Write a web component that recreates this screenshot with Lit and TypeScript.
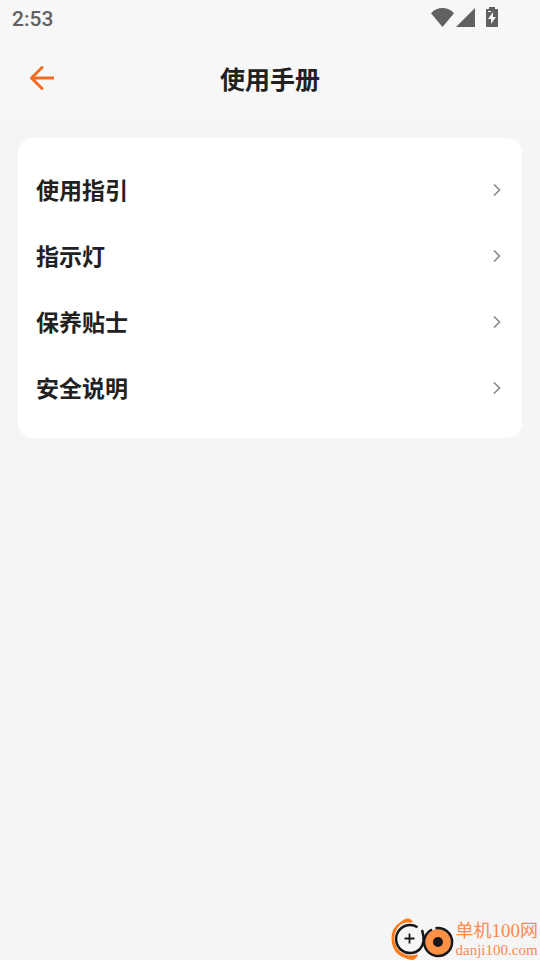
import { LitElement, html, css } from "lit";
import { customElement, property } from "lit/decorators.js";

@customElement("status-bar")
class StatusBar extends LitElement {
  static styles = css`
    :host {
      display: flex;
      align-items: center;
      justify-content: space-between;
      height: 36px;
      padding: 0 40px 0 12px;
      color: #616161;
      font: 500 21px/36px Roboto, sans-serif;
    }
    time {
      padding-top: 2px;
    }
    .icons {
      display: flex;
    }
    svg {
      display: block;
      fill: currentColor;
    }
  `;

  render() {
    return html`
      <time>2:53</time>
      <div class="icons">
        <svg width="70" height="24" viewBox="0 0 70 24" aria-hidden="true">
          <path d="M1 7.2C7.5.4 17.5.4 24 7.2L12.5 21Z" />
          <path d="M26 21L45 2V21Z" />
          <path
            fill-rule="evenodd"
            d="M59 1h6v2h2q1 0 1 1v16q0 1-1 1H57q-1 0-1-1V4q0-1 1-1h2ZM63 6l-5 7h3v5l5-7h-3ZM58 5h3v1h-3Z"
          />
        </svg>
      </div>
    `;
  }
}

@customElement("manual-item")
class ManualItem extends LitElement {
  @property() label = "";

  static styles = css`
    :host {
      display: block;
    }
    button {
      display: flex;
      align-items: center;
      justify-content: space-between;
      width: 100%;
      height: 66px;
      padding: 0 20px 0 18px;
      border: 0;
      background: none;
      color: #212121;
      font: inherit;
      text-align: left;
      cursor: pointer;
    }
    svg {
      display: block;
      fill: none;
      stroke: #8c8c8c;
      stroke-width: 1.7;
    }
  `;

  render() {
    return html`
      <button type="button">
        <span>${this.label}</span>
        <svg width="10" height="14" viewBox="0 0 10 14" aria-hidden="true">
          <path d="M2 2.5L7.500 8L2 13.5" />
        </svg>
      </button>
    `;
  }
}

@customElement("site-mark")
class SiteMark extends LitElement {
  static styles = css`
    :host {
      display: flex;
      align-items: flex-end;
      color: #fb8a4c;
    }
    svg {
      display: block;
    }
    .text {
      display: flex;
      flex-direction: column;
      padding-left: 1px;
      white-space: nowrap;
    }
    .name {
      font: 400 18px/18px "Noto Sans CJK SC", sans-serif;
    }
    .digits {
      font: 19px/18px "Liberation Serif", serif;
    }
    .site {
      font: 15px/20px "Liberation Serif", serif;
    }
  `;

  render() {
    return html`
      <svg width="64" height="42" viewBox="0 0 64 42" fill="none" aria-hidden="true">
        <path
          d="M8 5Q11 3 13 1.500Q17-.5 20 1.500L22 4Q20 5 16 4.500Q8 5 5 13Q1 22 6 30Q10 36 18 37.500L24 37L27 36Q26 40 22 42Q18 42 14 40Q5 37 2 29Q-1 20 2 12Q4 8 8 5Z"
          fill="#ff7a18"
        />
        <circle cx="18.500" cy="21" r="14" fill="#f5f5f5" />
        <path d="M26.500 9.200A14 14 0 1 0 29 31Q35 24 31 12" stroke="#171719" stroke-width="2.500" />
        <circle cx="47" cy="24" r="13" fill="#ff9147" />
        <path d="M44.500 10.200A14 14 0 1 1 34 19Q36 14 41 11.500" stroke="#171719" stroke-width="2.500" />
        <path d="M13.500 20.500H23.500M18.500 15.500V25.500" stroke="#171719" stroke-width="1.800" />
        <circle cx="47" cy="24" r="5" fill="#171719" />
      </svg>
      <div class="text">
        <span class="name">单机<span class="digits">100</span>网</span>
        <span class="site">danji100.com</span>
      </div>
    `;
  }
}

@customElement("app-root")
class AppRoot extends LitElement {
  private items = ["使用指引", "指示灯", "保养贴士", "安全说明"];

  static styles = css`
    :host {
      display: flex;
      flex-direction: column;
      min-height: 100vh;
      background: #f5f5f5;
      color: #212121;
      font-family: "Noto Sans CJK SC", sans-serif;
    }
    .top {
      background: #f7f7f7;
    }
    header {
      display: grid;
      grid-template-columns: 60px 1fr 60px;
      align-items: center;
      height: 84px;
      padding: 0 12px;
    }
    .back {
      display: grid;
      place-items: center;
      width: 60px;
      height: 60px;
      padding: 0;
      border: 0;
      background: none;
      cursor: pointer;
    }
    .back svg {
      display: block;
      fill: none;
      stroke: #f26b21;
      stroke-width: 3;
    }
    h1 {
      margin: 0;
      font-size: 25px;
      line-height: 36px;
      font-weight: 700;
      text-align: center;
    }
    ul {
      margin: 18px;
      padding: 18px 0;
      border-radius: 15px;
      background: #fff;
      list-style: none;
      font-size: 23px;
      line-height: 32px;
      font-weight: 700;
    }
    site-mark {
      align-self: flex-end;
      margin-top: auto;
      padding-right: 2px;
    }
  `;

  render() {
    return html`
      <div class="top">
        <status-bar></status-bar>
        <header>
          <button class="back" type="button" aria-label="返回">
            <svg width="26" height="26" viewBox="0 0 26 26" aria-hidden="true">
              <path d="M25 13H3" />
              <path d="M13 2.500L2.500 13L13 23.500" stroke-linecap="round" stroke-linejoin="round" />
            </svg>
          </button>
          <h1>使用手册</h1>
        </header>
      </div>
      <ul>
        ${this.items.map((item) => html`<li><manual-item .label=${item}></manual-item></li>`)}
      </ul>
      <site-mark></site-mark>
    `;
  }
}
